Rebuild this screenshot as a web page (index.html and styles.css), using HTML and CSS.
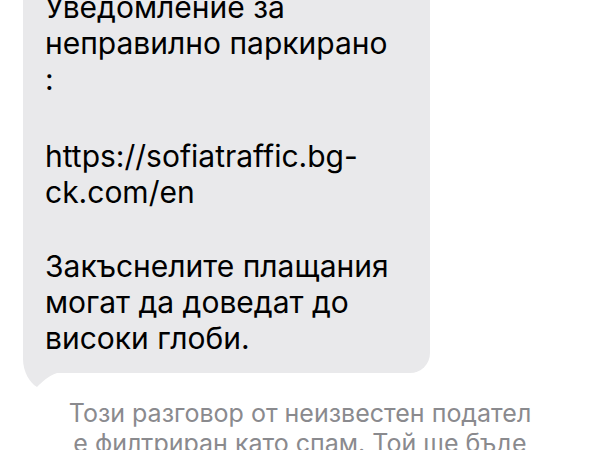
FILE: index.html
```html
<!DOCTYPE html>
<html lang="bg">
<head>
<meta charset="utf-8">
<link rel="stylesheet" href="styles.css">
</head>
<body>
<div class="screen">
  <div class="bubble">
    <p class="para p1">Уведомление за<br>неправилно паркирано<br>:</p>
    <p class="para p2">https://sofiatraffic.bg-<br>ck.com/en</p>
    <p class="para p3">Закъснелите плащания<br>могат да доведат до<br>високи глоби.</p>
    <svg class="tail" width="34" height="36" viewBox="0 0 34 36" aria-hidden="true">
      <path d="M0 0 L0 6 C0 19 7 30 14 34 C19 29 25 23 34 20 L34 0 Z" fill="#e9e9eb"/>
    </svg>
  </div>
  <p class="notice">Този разговор от неизвестен подател<br>е филтриран като спам. Той ще бъде</p>
</div>
</body>
</html>
```
FILE: styles.css
```css
html, body {
  margin: 0;
  padding: 0;
  background: #ffffff;
  overflow: hidden;
}
.screen {
  width: 600px;
  height: 450px;
  display: flex;
  flex-direction: column;
  font-family: Inter, "Noto Sans", "Liberation Sans", sans-serif;
}
.bubble {
  position: relative;
  box-sizing: border-box;
  width: 407px;
  margin: -21px 0 0 23px;
  padding: 10px 16px 17px 22px;
  background: #e9e9eb;
  border-radius: 20px;
  color: #000000;
}
.para {
  margin: 0;
  font-size: 30px;
  line-height: 36px;
  white-space: nowrap;
}
.p2 { margin-top: 41px; }
.p3 { margin-top: 38px; }
.tail {
  position: absolute;
  left: 0;
  bottom: -16px;
  display: block;
}
.notice {
  margin: 25px 0 0 0;
  text-align: center;
  font-size: 25px;
  line-height: 30px;
  color: #8a8a8e;
  white-space: nowrap;
}
```
